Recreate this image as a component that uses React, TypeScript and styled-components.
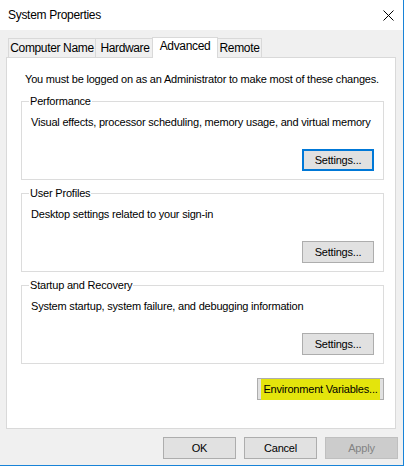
import React from "react";
import styled, { createGlobalStyle } from "styled-components";

const Global = createGlobalStyle`
  html, body { margin: 0; padding: 0; background: #ffffff; }
  body {
    font-family: "Liberation Sans", Arial, sans-serif;
    font-size: 11px;
    letter-spacing: -0.2px;
    color: #000;
  }
  * { box-sizing: border-box; }
`;

const Window = styled.div`
  width: 404px;
  height: 466px;
  display: flex;
  flex-direction: column;
  background: #f0f0f0;
  border-right: 1px solid #1883d7;
  border-bottom: 1px solid #1883d7;
`;

const TitleBar = styled.div`
  height: 30px;
  flex: none;
  background: #ffffff;
  display: flex;
  align-items: center;
  justify-content: space-between;
  padding: 0 9px 0 8px;
`;

const Title = styled.div`
  font-size: 12px;
  letter-spacing: -0.3px;
  line-height: 15px;
`;

const CloseBtn = styled.div`
  width: 12px;
  height: 12px;
  display: flex;
  align-items: center;
  justify-content: center;
`;

const Body = styled.div`
  flex: 1;
  display: flex;
  flex-direction: column;
  padding: 8px 0 0 6px;
`;

const TabStrip = styled.div`
  height: 19px;
  display: flex;
  align-items: flex-end;
  padding-left: 2px;
`;

const Tab = styled.div<{ $w: number; $active?: boolean; $ml?: number }>`
  width: ${(p) => p.$w}px;
  margin-left: ${(p) => p.$ml ?? 0}px;
  height: ${(p) => (p.$active ? 21 : 19)}px;
  margin-bottom: ${(p) => (p.$active ? -1 : 0)}px;
  padding-bottom: ${(p) => (p.$active ? 3 : 0)}px;
  border: 1px solid #d9d9d9;
  border-bottom: none;
  background: ${(p) => (p.$active ? "#ffffff" : "#f0f0f0")};
  position: relative;
  z-index: ${(p) => (p.$active ? 2 : 1)};
  display: flex;
  align-items: center;
  justify-content: center;
  font-size: 12px;
  letter-spacing: -0.35px;
  line-height: 15px;
  white-space: nowrap;
`;

const Panel = styled.div`
  width: 390px;
  height: 372px;
  background: #ffffff;
  border: 1px solid #d9d9d9;
  display: flex;
  flex-direction: column;
  align-items: stretch;
  padding: 14px 11px 0 14px;
`;

const Notice = styled.div`
  padding-left: 4px;
  line-height: 15px;
  white-space: nowrap;
`;

const Group = styled.fieldset<{ $mt: number }>`
  margin: ${(p) => p.$mt}px 0 0 0;
  padding: 0 9px 8px 9px;
  border: 1px solid #dcdcdc;
  min-width: 0;
  display: flex;
  flex-direction: column;
`;

const Legend = styled.legend`
  margin-left: -2px;
  padding: 0 1px;
  line-height: 15px;
`;

const Desc = styled.div`
  margin-top: 6px;
  line-height: 15px;
  white-space: nowrap;
`;

const RightRow = styled.div<{ $mt: number }>`
  display: flex;
  justify-content: flex-end;
  margin-top: ${(p) => p.$mt}px;
`;

const Button = styled.button<{ $w: number; $focus?: boolean }>`
  width: ${(p) => p.$w}px;
  height: 22px;
  padding: 0;
  margin: 0;
  font-family: "Liberation Sans", Arial, sans-serif;
  font-size: 11px;
  letter-spacing: -0.2px;
  line-height: 15px;
  white-space: nowrap;
  color: ${(p) => (p.disabled ? "#838383" : "#000000")};
  background: ${(p) => (p.disabled ? "#cccccc" : "#e1e1e1")};
  border: ${(p) =>
    p.$focus ? "2px solid #0078d7" : p.disabled ? "1px solid #bfbfbf" : "1px solid #adadad"};
  display: flex;
  align-items: center;
  justify-content: center;
`;

const Marker = styled.span`
  background: #e4e40c;
  padding: 3px 2px 3px 2px;
`;

const Footer = styled.div`
  display: flex;
  justify-content: flex-end;
  gap: 8px;
  padding-right: 5px;
  margin-top: 8px;
`;

export default function App() {
  return (
    <>
      <Global />
      <Window>
        <TitleBar>
          <Title>System Properties</Title>
          <CloseBtn>
            <svg width="11" height="11" viewBox="0 0 11 11">
              <path d="M0.5 0.5 L10.5 10.5 M10.5 0.5 L0.5 10.5" stroke="#000" strokeWidth="1" fill="none" />
            </svg>
          </CloseBtn>
        </TitleBar>
        <Body>
          <TabStrip>
            <Tab $w={88}>Computer Name</Tab>
            <Tab $w={60} $ml={-1}>Hardware</Tab>
            <Tab $w={66} $ml={-3} $active>Advanced</Tab>
            <Tab $w={45} $ml={-1}>Remote</Tab>
          </TabStrip>
          <Panel>
            <Notice>You must be logged on as an Administrator to make most of these changes.</Notice>
            <Group $mt={7}>
              <Legend>Performance</Legend>
              <Desc>Visual effects, processor scheduling, memory usage, and virtual memory</Desc>
              <RightRow $mt={19}>
                <Button $w={72} $focus>Settings...</Button>
              </RightRow>
            </Group>
            <Group $mt={6}>
              <Legend>User Profiles</Legend>
              <Desc>Desktop settings related to your sign-in</Desc>
              <RightRow $mt={19}>
                <Button $w={72}>Settings...</Button>
              </RightRow>
            </Group>
            <Group $mt={6}>
              <Legend>Startup and Recovery</Legend>
              <Desc>System startup, system failure, and debugging information</Desc>
              <RightRow $mt={19}>
                <Button $w={72}>Settings...</Button>
              </RightRow>
            </Group>
            <RightRow $mt={14}>
              <Button $w={127}>
                <Marker>Environment Variables...</Marker>
              </Button>
            </RightRow>
          </Panel>
          <Footer>
            <Button $w={73}>OK</Button>
            <Button $w={73}>Cancel</Button>
            <Button $w={73} disabled>Apply</Button>
          </Footer>
        </Body>
      </Window>
    </>
  );
}
